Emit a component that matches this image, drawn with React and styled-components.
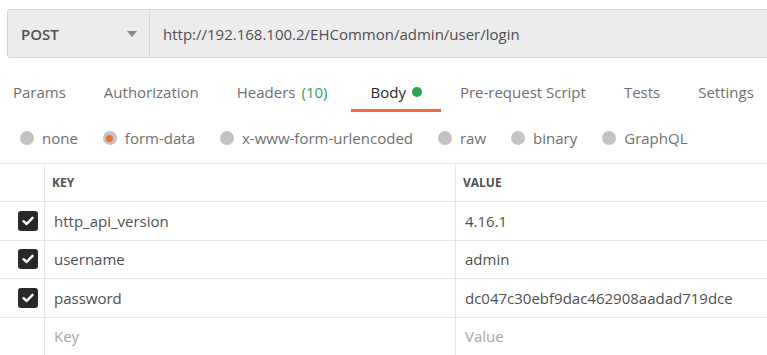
import React from 'react';
import styled, { createGlobalStyle } from 'styled-components';

const GlobalStyle = createGlobalStyle`
  html, body {
    margin: 0;
    padding: 0;
    background: #ffffff;
  }
  body {
    font-family: "Open Sans", "Noto Sans", sans-serif;
    -webkit-font-smoothing: antialiased;
  }
`;

const Page = styled.div`
  width: 767px;
  height: 355px;
  overflow: hidden;
  background: #fff;
`;

const RequestBar = styled.div`
  display: flex;
  height: 49px;
  margin: 9px -20px 0 7px;
  box-sizing: border-box;
  background: #ececec;
  border: 1px solid #d6d6d6;
  border-radius: 3px;
`;

const Method = styled.div`
  width: 142px;
  flex-shrink: 0;
  display: flex;
  align-items: center;
  justify-content: space-between;
  box-sizing: border-box;
  padding: 0 12px 0 13px;
  border-right: 1px solid #d6d6d6;
  font-size: 15px;
  font-weight: 600;
  color: #505050;
`;

const Caret = styled.span`
  width: 0;
  height: 0;
  border-left: 5px solid transparent;
  border-right: 5px solid transparent;
  border-top: 6px solid #8a8a8a;
`;

const Url = styled.div`
  flex: 1;
  display: flex;
  align-items: center;
  padding-left: 13px;
  font-size: 15px;
  color: #505050;
`;

const Tabs = styled.div`
  display: flex;
  margin: 24px 0 0 -6px;
`;

const Tab = styled.div`
  display: flex;
  align-items: center;
  gap: 6px;
  padding: 0 19px 7px;
  line-height: 20px;
  font-size: 15px;
  white-space: nowrap;
  color: ${p => (p.$active ? '#282828' : '#707070')};
  border-bottom: 3px solid ${p => (p.$active ? '#f26b3a' : 'transparent')};
`;

const Count = styled.span`
  color: #2aa353;
  margin-right: 5px;
`;

const Dot = styled.span`
  width: 10px;
  height: 10px;
  border-radius: 50%;
  background: #2aa353;
`;

const Radios = styled.div`
  display: flex;
  gap: 25px;
  margin: 16px 0 0 20px;
  line-height: 20px;
`;

const RadioItem = styled.label`
  display: flex;
  align-items: center;
  gap: 8px;
  font-size: 15px;
  color: #707070;
`;

const Radio = styled.span`
  width: 14px;
  height: 14px;
  border-radius: 50%;
  background: #c4c4c4;
  display: flex;
  align-items: center;
  justify-content: center;
  &::after {
    content: '';
    width: 7px;
    height: 7px;
    border-radius: 50%;
    background: ${p => (p.$checked ? '#f26b3a' : 'transparent')};
  }
`;

const Table = styled.div`
  margin-top: 15px;
  border-top: 1px solid #e6e6e6;
  margin-right: -20px;
`;

const Row = styled.div`
  display: grid;
  grid-template-columns: 44px 411px 1fr;
  height: ${p => (p.$head ? '37px' : '37.5px')};
  border-bottom: 1px solid #e6e6e6;
`;

const Cell = styled.div`
  display: flex;
  align-items: center;
  padding-left: ${p => (p.$head ? '7px' : '9px')};
  border-left: 1px solid #e6e6e6;
  font-size: ${p => (p.$head ? '12px' : '15px')};
  font-weight: ${p => (p.$head ? 700 : 400)};
  color: ${p => (p.$placeholder ? '#a8a8a8' : '#505050')};
`;

const CheckCell = styled.div`
  display: flex;
  align-items: center;
  padding-left: 18px;
`;

const Checkbox = styled.span`
  width: 20px;
  height: 20px;
  border-radius: 3px;
  background: #282828;
  display: flex;
  align-items: center;
  justify-content: center;
`;

const CheckIcon = () => (
  <svg width="12" height="10" viewBox="0 0 12 10">
    <path d="M1.5 5.2 L4.6 8 L10.5 1.8" fill="none" stroke="#fff" strokeWidth="2.4" strokeLinecap="round" strokeLinejoin="round" />
  </svg>
);

const tabs = [
  { label: 'Params' },
  { label: 'Authorization' },
  { label: 'Headers', count: '(10)' },
  { label: 'Body', active: true, dot: true },
  { label: 'Pre-request Script' },
  { label: 'Tests' },
  { label: 'Settings' },
];

const bodyTypes = ['none', 'form-data', 'x-www-form-urlencoded', 'raw', 'binary', 'GraphQL'];

const params = [
  { key: 'http_api_version', value: '4.16.1' },
  { key: 'username', value: 'admin' },
  { key: 'password', value: 'dc047c30ebf9dac462908aadad719dce' },
];

const App = () => {
  return (
    <Page>
      <GlobalStyle />
      <RequestBar>
        <Method>
          POST
          <Caret />
        </Method>
        <Url>http://192.168.100.2/EHCommon/admin/user/login</Url>
      </RequestBar>

      <Tabs>
        {tabs.map(t => (
          <Tab key={t.label} $active={t.active}>
            {t.label}
            {t.count && <Count>{t.count}</Count>}
            {t.dot && <Dot />}
          </Tab>
        ))}
      </Tabs>

      <Radios>
        {bodyTypes.map(b => (
          <RadioItem key={b}>
            <Radio $checked={b === 'form-data'} />
            {b}
          </RadioItem>
        ))}
      </Radios>

      <Table>
        <Row $head>
          <CheckCell />
          <Cell $head>KEY</Cell>
          <Cell $head>VALUE</Cell>
        </Row>
        {params.map(p => (
          <Row key={p.key}>
            <CheckCell>
              <Checkbox><CheckIcon /></Checkbox>
            </CheckCell>
            <Cell>{p.key}</Cell>
            <Cell>{p.value}</Cell>
          </Row>
        ))}
        <Row>
          <CheckCell />
          <Cell $placeholder>Key</Cell>
          <Cell $placeholder>Value</Cell>
        </Row>
      </Table>
    </Page>
  );
};

export default App;
